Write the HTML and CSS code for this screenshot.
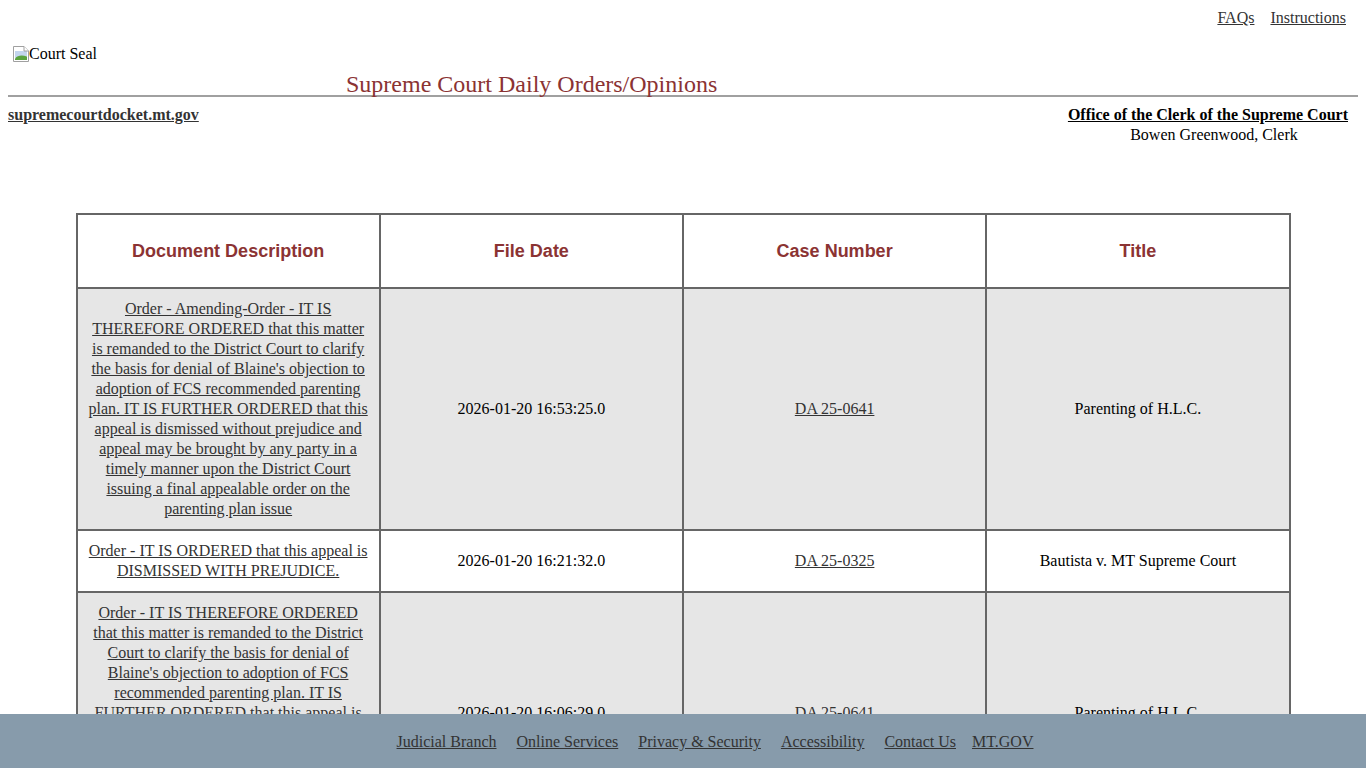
FILE: index.html
```html
<!DOCTYPE html>
<html lang="en">
<head>
<meta charset="utf-8">
<title>Supreme Court Daily Orders/Opinions</title>
<link rel="stylesheet" href="styles.css">
</head>
<body>
<nav class="top-nav">
  <a href="#">FAQs</a>
  <a href="#">Instructions</a>
</nav>
<div class="seal">
  <svg class="broken" width="16" height="16" viewBox="0 0 16 16" aria-hidden="true">
    <path d="M0.5 0.5H11L15.5 5V15.5H0.5Z" fill="#fff" stroke="#a0a0a0"/>
    <path d="M2 5H14V10L2 12Z" fill="#c3d5ee"/>
    <path d="M2 12.5C5 9 9 9 14 10.5V14H2Z" fill="#5aa33f"/>
    <path d="M11 0.5V5H15.5" fill="#fff" stroke="#a0a0a0"/>
  </svg><span>Court Seal</span>
</div>
<h1 class="page-title">Supreme Court Daily Orders/Opinions</h1>
<hr class="rule">
<div class="info">
  <a class="docket" href="#">supremecourtdocket.mt.gov</a>
  <div class="clerk">
    <div class="office">Office of the Clerk of the Supreme Court</div>
    <div class="name">Bowen Greenwood, Clerk</div>
  </div>
</div>
<table class="orders">
  <thead>
    <tr><th>Document Description</th><th>File Date</th><th>Case Number</th><th>Title</th></tr>
  </thead>
  <tbody>
    <tr class="shade">
      <td><a href="#">Order - Amending-Order - IT IS THEREFORE ORDERED that this matter is remanded to the District Court to clarify the basis for denial of Blaine's objection to adoption of FCS recommended parenting plan. IT IS FURTHER ORDERED that this appeal is dismissed without prejudice and appeal may be brought by any party in a timely manner upon the District Court issuing a final appealable order on the parenting plan issue</a></td>
      <td>2026-01-20 16:53:25.0</td>
      <td><a href="#">DA 25-0641</a></td>
      <td>Parenting of H.L.C.</td>
    </tr>
    <tr>
      <td><a href="#">Order - IT IS ORDERED that this appeal is DISMISSED WITH PREJUDICE.</a></td>
      <td>2026-01-20 16:21:32.0</td>
      <td><a href="#">DA 25-0325</a></td>
      <td>Bautista v. MT Supreme Court</td>
    </tr>
    <tr class="shade">
      <td><a href="#">Order - IT IS THEREFORE ORDERED that this matter is remanded to the District Court to clarify the basis for denial of Blaine's objection to adoption of FCS recommended parenting plan. IT IS FURTHER ORDERED that this appeal is dismissed without prejudice and appeal may be brought by any party in a timely manner upon the District Court issuing a final appealable order on the parenting plan issue</a></td>
      <td>2026-01-20 16:06:29.0</td>
      <td><a href="#">DA 25-0641</a></td>
      <td>Parenting of H.L.C.</td>
    </tr>
  </tbody>
</table>
<footer class="site-footer">
  <a href="#">Judicial Branch</a>
  <a href="#">Online Services</a>
  <a href="#">Privacy &amp; Security</a>
  <a href="#">Accessibility</a>
  <a href="#">Contact Us</a>
  <a class="last" href="#">MT.GOV</a>
</footer>
</body>
</html>
```
FILE: styles.css
```css
html, body {
  margin: 0;
  padding: 0;
}
body {
  padding: 0 8px 60px;
  font-family: "Liberation Serif", "Times New Roman", serif;
  font-size: 16px;
  line-height: 20px;
  color: #000;
  background: #fff;
}
a {
  color: #333;
  text-decoration: underline;
}
.top-nav {
  display: flex;
  justify-content: flex-end;
  gap: 16px;
  padding: 8px 12px 0 0;
}
.seal {
  display: flex;
  align-items: center;
  height: 20px;
  padding: 16px 0 0 5px;
}
.broken {
  display: block;
  flex: none;
}
.page-title {
  margin: 0;
  padding: 10px 0 0 338px;
  font-size: 24px;
  line-height: 21px;
  font-weight: 400;
  color: #8b3333;
}
.rule {
  margin: 0;
  border: 0;
  height: 2px;
  background: #a0a0a0;
}
.info {
  display: flex;
  justify-content: space-between;
  padding: 8px 10px 0 0;
}
.docket {
  font-weight: 700;
}
.office {
  font-weight: 700;
  text-decoration: underline;
}
.name {
  padding-left: 12px;
  text-align: center;
}
.orders {
  width: 90%;
  margin: 68px auto 0;
  border-collapse: collapse;
  table-layout: fixed;
}
.orders th,
.orders td {
  border: 2px solid #666;
  text-align: center;
  vertical-align: middle;
}
.orders th {
  padding: 25px 10px;
  font-family: "Liberation Sans", Arial, sans-serif;
  font-size: 18px;
  line-height: 22px;
  font-weight: 700;
  color: #8b3333;
}
.orders td {
  padding: 10px;
}
.shade td {
  background: #e6e6e6;
}
.site-footer {
  position: fixed;
  left: 0;
  right: 0;
  bottom: 0;
  box-sizing: border-box;
  height: 54px;
  padding: 2px 0 0 64px;
  display: flex;
  justify-content: center;
  align-items: center;
  gap: 20px;
  background: #879bab;
}
.site-footer .last {
  margin-left: -4px;
}
```
